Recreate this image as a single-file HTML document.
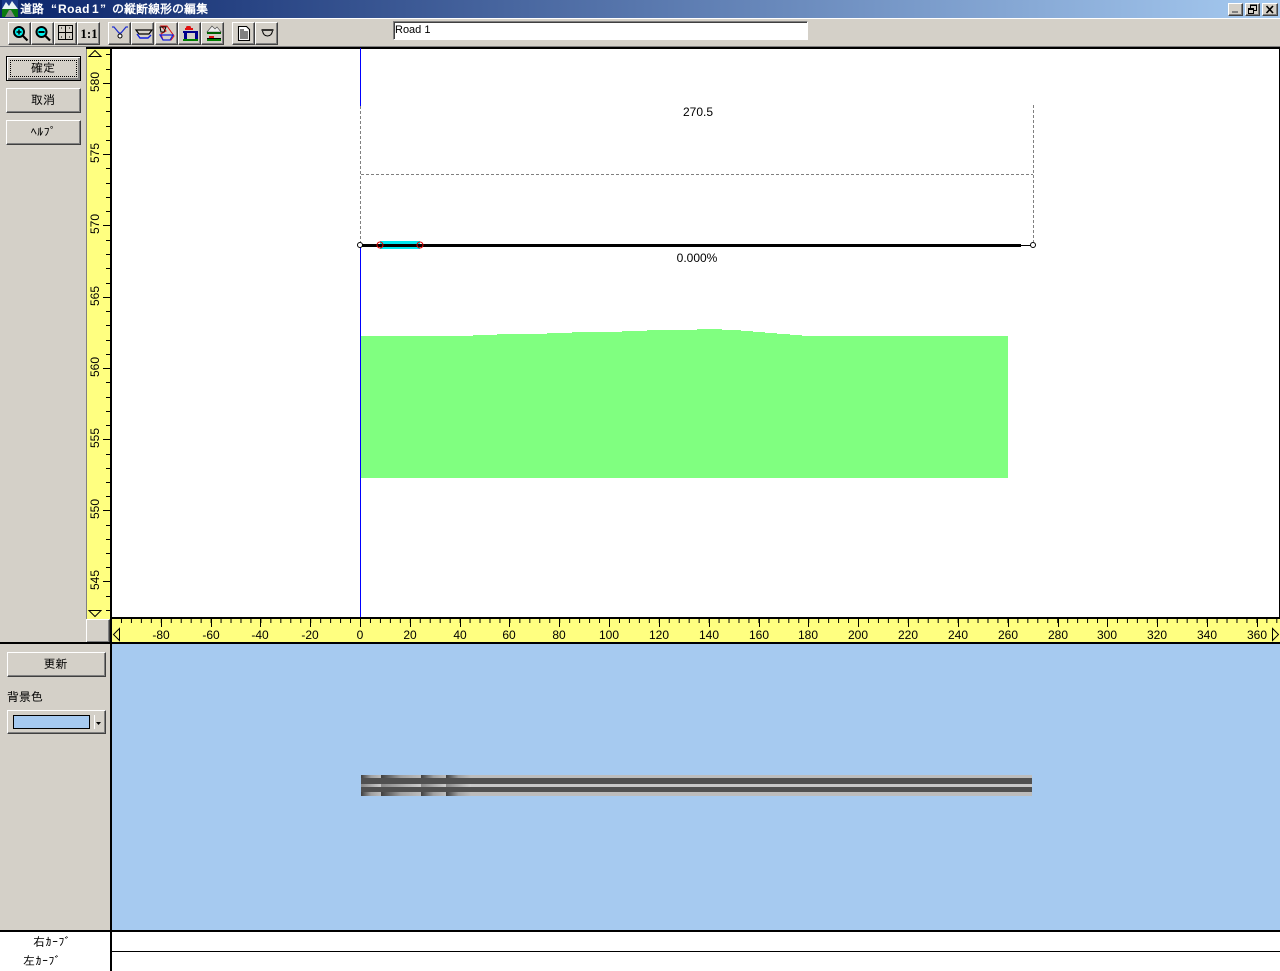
<!DOCTYPE html>
<html lang="ja"><head><meta charset="utf-8"><title>道路 Road 1</title>
<style>
html,body{margin:0;padding:0;width:1280px;height:971px;overflow:hidden;background:#d4d0c8}
body{position:relative;font-family:"Liberation Sans","WenQuanYi Zen Hei","IPAGothic",sans-serif;font-size:12px;color:#000}
.a{position:absolute}
.b{position:absolute;box-sizing:border-box;background:#d4d0c8;border:1px solid;border-color:#fff #404040 #404040 #fff;box-shadow:inset -1px -1px 0 #808080;text-align:center;font-family:"IPAGothic","WenQuanYi Zen Hei",sans-serif;font-size:12px}
.t{position:absolute;top:1px;height:16px;line-height:16px;color:#fff;font-weight:bold;font-size:12px;font-family:"IPAGothic","WenQuanYi Zen Hei",sans-serif;white-space:nowrap}
.l{font-family:"Liberation Sans",sans-serif}
svg{position:absolute;display:block}
</style></head><body>
<div class="a" style="left:0;top:0;width:1280px;height:18px;background:linear-gradient(90deg,#0a246a,#a6caf0)"></div>
<svg style="left:2px;top:0" width="16" height="17" viewBox="0 0 16 17"><rect width="16" height="9" fill="#1a3a8a"/><path d="M0 9L4 2 7 6 10 1 16 9z" fill="#e8f4f4"/><rect y="9" width="16" height="8" fill="#087a10"/><path d="M3 17L7 10h2l4 7z" fill="#888"/></svg>
<div class="t" style="left:20px">道路</div>
<div class="t l" style="left:51px">“</div>
<div class="t l" style="left:58px;letter-spacing:.5px">Road</div>
<div class="t l" style="left:92px">1</div>
<div class="t l" style="left:100px">”</div>
<div class="t" style="left:112px">の縦断線形の編集</div>
<div class="b" style="left:1228px;top:3px;width:15px;height:13px"></div><div class="a" style="left:1232px;top:11px;width:6px;height:2px;background:#808080"></div>
<div class="b" style="left:1245px;top:3px;width:15px;height:13px"></div>
<svg style="left:1245px;top:3px" width="15" height="13" fill="none" stroke="#000"><path d="M5.500 5V2.500h6v5H9M5 2h7M3.500 6.500h5v4h-5zM3 5.500h6"/></svg>
<div class="b" style="left:1262px;top:3px;width:16px;height:13px"></div>
<svg style="left:1262px;top:3px" width="16" height="13" fill="none" stroke="#000" stroke-width="1.600"><path d="M4.500 3l6.500 7M11 3L4.500 10"/></svg>

<div class="a" style="left:0;top:18px;width:1280px;height:1px;background:#fff"></div>
<div class="a" style="left:0;top:46px;width:1280px;height:1px;background:#808080"></div>
<div class="a" style="left:86px;top:47px;width:1194px;height:2px;background:#000"></div>

<!-- toolbar buttons -->
<div class="b" style="left:8px;top:22px;width:23px;height:23px"></div>
<div class="b" style="left:31px;top:22px;width:23px;height:23px"></div>
<div class="b" style="left:54px;top:22px;width:23px;height:23px"></div>
<div class="b" style="left:77px;top:22px;width:23px;height:23px"></div>
<div class="b" style="left:108px;top:22px;width:23px;height:23px"></div>
<div class="b" style="left:131px;top:22px;width:23px;height:23px"></div>
<div class="b" style="left:155px;top:22px;width:23px;height:23px"></div>
<div class="b" style="left:178px;top:22px;width:23px;height:23px"></div>
<div class="b" style="left:201px;top:22px;width:23px;height:23px"></div>
<div class="b" style="left:232px;top:22px;width:23px;height:23px"></div>
<div class="b" style="left:255px;top:22px;width:23px;height:23px"></div>
<svg style="left:0;top:15px" width="290" height="35" viewBox="0 0 290 35" fill="none">
<circle cx="19" cy="17" r="5" fill="#00f0f0" stroke="#000" stroke-width="2"/><path d="M16.500 17h5M19 14.500v5" stroke="#000" stroke-width="1.500"/><path d="M23 21l4.500 4.500" stroke="#000" stroke-width="2.200"/>
<circle cx="41.500" cy="17" r="5" fill="#00f0f0" stroke="#000" stroke-width="2"/><path d="M38.500 17h6" stroke="#000" stroke-width="2"/><path d="M45.500 21l4.500 4.500" stroke="#000" stroke-width="2.200"/>
<rect x="58.500" y="10.500" width="14" height="14" stroke="#000"/><path d="M65.500 11v13M59 17.500h13" stroke="#000" stroke-width="1"/><path d="M61 13h1M69 13h1M61 22h1M69 22h1" stroke="#000"/>
<text x="89" y="23" font-family="Liberation Serif" font-weight="bold" font-size="13" fill="#000" text-anchor="middle">1:1</text>
<path d="M112 12h2l5 6h2l5-6h2" stroke="#2030d0" stroke-width="1.300"/><circle cx="120" cy="21" r="2" fill="#fff" stroke="#000"/>
<path d="M136 15h16l-3 4h-10z" fill="#d4d0c8" stroke="#000" stroke-width="1.200"/><path d="M137 19l3 4h8l3-3" stroke="#1020e0" stroke-width="1.400"/>
<path d="M161 11h6l7 10-3 4h-8l-2-6 5-3z" stroke="#e01010"/><path d="M160 12h6l-2 5h-3z" stroke="#000"/><path d="M160 20h13l-3 5h-7z" stroke="#1020e0" stroke-width="1.200"/>
<rect x="186" y="11" width="5" height="3" rx="1.500" fill="#e01010"/><rect x="185" y="13" width="8" height="2" fill="#e01010"/><path d="M183 16h15v2h-15zM184 18h3v6h-3zM195 18h3v6h-3z" fill="#00008c"/><rect x="183" y="24" width="15" height="2" fill="#008000"/>
<path d="M207 17l5-6 3 3 2-2 4 5z" fill="#eee" stroke="#444" stroke-width=".600"/><path d="M207 17h14v2h-14z" fill="#006000"/><rect x="207" y="23" width="14" height="1" fill="#000"/><rect x="209" y="21" width="5" height="2" fill="#e01010"/><rect x="207" y="24" width="14" height="2" fill="#008000"/>
<path d="M238.500 11.500h8l3 3v11h-11z" fill="#fff" stroke="#000" stroke-width="1.100"/><path d="M240 15h4M240 17h8M240 19h8M240 21h8M240 23h8" stroke="#000"/>
<path d="M261.500 15h12" stroke="#000" stroke-width="1.500"/><path d="M262.500 16q1 5 5 5t5-5" stroke="#000"/>
</svg>
<div class="a" style="left:393px;top:21px;width:415px;height:19px;box-sizing:border-box;background:#fff;border:1px solid;border-color:#808080 #fff #fff #808080;box-shadow:inset 1px 1px 0 #404040;font-size:11px;line-height:17px;padding-left:1px">Road 1</div>

<!-- left buttons -->
<div class="b" style="left:6px;top:56px;width:75px;height:25px;border:1px solid #000;line-height:23px;padding-right:1px;box-shadow:inset 1px 1px 0 #fff,inset -2px -2px 0 #808080"><div class="a" style="left:3px;top:3px;right:3px;bottom:3px;border:1px dotted #000"></div>確定</div>
<div class="b" style="left:6px;top:88px;width:75px;height:25px;line-height:22px;padding-right:1px">取消</div>
<div class="b" style="left:6px;top:120px;width:75px;height:25px;line-height:22px;letter-spacing:.5px">ﾍﾙﾌﾟ</div>

<!-- main canvas -->
<div class="a" style="left:111px;top:49px;width:1168px;height:568px;background:#fff"></div>
<div class="a" style="left:1279px;top:47px;width:1px;height:570px;background:#000"></div>
<svg style="left:0;top:0" width="1280" height="640" viewBox="0 0 1280 640" fill="none">
<path d="M361 336H473V335H497V334H547V333H572V332H622V331H647V330H697V329H722V330H741V331H753V332H765V333H777V334H790V335H802V336H1008V478H361Z" fill="#80ff80"/>
<path d="M360.500 48V106M360.500 245V617" stroke="#0000ff"/>
<path d="M360.500 106V242M1033.500 105V242M361 174.500H1033" stroke="#808080" stroke-dasharray="3 2"/>
<rect x="380" y="241" width="40" height="8" fill="#00e8f0"/>
<rect x="360" y="244" width="661" height="3" fill="#000"/>
<rect x="1021" y="245" width="12" height="1" fill="#000"/>
<circle cx="380" cy="245" r="3" stroke="#e00000"/><circle cx="420" cy="245" r="3" stroke="#e00000"/>
<circle cx="360" cy="245" r="2.500" fill="#fff" stroke="#000"/><circle cx="1033" cy="245" r="2.500" fill="#fff" stroke="#000"/>
<text x="698" y="116" font-size="12" font-family="Liberation Sans" text-anchor="middle" fill="#000">270.5</text>
<text x="697" y="262" font-size="12" font-family="Liberation Sans" text-anchor="middle" fill="#000">0.000%</text>
</svg>

<!-- vertical ruler -->
<svg style="left:86px;top:47px" width="25" height="572" viewBox="86 47 25 572" fill="none">
<rect x="86" y="49" width="25" height="570" fill="#ffff80"/>
<path d="M86.500 49v570" stroke="#808080"/>
<path d="M106 54.500h4M106 69.500h4M106 97.500h4M106 111.500h4M106 126.500h4M106 140.500h4M106 168.500h4M106 183.500h4M106 197.500h4M106 211.500h4M106 240.500h4M106 254.500h4M106 268.500h4M106 283.500h4M106 311.500h4M106 325.500h4M106 340.500h4M106 354.500h4M106 382.500h4M106 397.500h4M106 411.500h4M106 425.500h4M106 454.500h4M106 468.500h4M106 482.500h4M106 496.500h4M106 525.500h4M106 539.500h4M106 553.500h4M106 567.500h4M106 596.500h4M106 610.500h4" stroke="#000"/>
<path d="M103 83.500h7M103 154.500h7M103 225.500h7M103 297.500h7M103 368.500h7M103 439.500h7M103 510.500h7M103 581.500h7" stroke="#000"/>
<path d="M89 56.500l6-6 6 6zM89 610.500l6 6 6-6z" stroke="#000"/>
<g font-family="Liberation Sans" font-size="12" fill="#000" text-anchor="middle">
<text transform="translate(99 82) rotate(-90)">580</text>
<text transform="translate(99 153) rotate(-90)">575</text>
<text transform="translate(99 224) rotate(-90)">570</text>
<text transform="translate(99 296) rotate(-90)">565</text>
<text transform="translate(99 367) rotate(-90)">560</text>
<text transform="translate(99 438) rotate(-90)">555</text>
<text transform="translate(99 509) rotate(-90)">550</text>
<text transform="translate(99 580) rotate(-90)">545</text>
</g></svg>

<div class="b" style="left:86px;top:619px;width:24px;height:24px"></div>

<!-- horizontal ruler -->
<svg style="left:111px;top:617px" width="1169" height="26" viewBox="111 617 1169 26" fill="none">
<defs><pattern id="ht" width="9.960" height="26" patternUnits="userSpaceOnUse" x="360" y="617"><rect x="0" y="2" width="1" height="4" fill="#000"/></pattern></defs>
<rect x="111" y="617" width="1169" height="26" fill="#ffff80"/>
<rect x="111" y="617" width="1169" height="26" fill="url(#ht)"/>
<rect x="111" y="617" width="1169" height="2" fill="#000"/>
<path d="M161.500 619v8M211.500 619v8M260.500 619v8M310.500 619v8M360.500 619v8M410.500 619v8M460.500 619v8M509.500 619v8M559.500 619v8M609.500 619v8M659.500 619v8M709.500 619v8M759.500 619v8M808.500 619v8M858.500 619v8M908.500 619v8M958.500 619v8M1008.500 619v8M1058.500 619v8M1107.500 619v8M1157.500 619v8M1207.500 619v8M1257.500 619v8" stroke="#000"/>
<path d="M119.500 628.500v12l-6-6zM1272.500 628.500v12l6-6z" stroke="#000"/>
<g font-family="Liberation Sans" font-size="12" fill="#000" text-anchor="middle">
<text x="161" y="639">-80</text><text x="211" y="639">-60</text><text x="260" y="639">-40</text><text x="310" y="639">-20</text><text x="360" y="639">0</text><text x="410" y="639">20</text><text x="460" y="639">40</text><text x="509" y="639">60</text><text x="559" y="639">80</text><text x="609" y="639">100</text><text x="659" y="639">120</text><text x="709" y="639">140</text><text x="759" y="639">160</text><text x="808" y="639">180</text><text x="858" y="639">200</text><text x="908" y="639">220</text><text x="958" y="639">240</text><text x="1008" y="639">260</text><text x="1058" y="639">280</text><text x="1107" y="639">300</text><text x="1157" y="639">320</text><text x="1207" y="639">340</text><text x="1257" y="639">360</text>
</g></svg>

<!-- lower pane -->
<div class="a" style="left:0;top:642px;width:1280px;height:2px;background:#000"></div>
<div class="a" style="left:112px;top:644px;width:1168px;height:286px;background:#a6caf0"></div>
<div class="a" style="left:110px;top:617px;width:2px;height:354px;background:#000"></div>
<div class="a" style="left:110px;top:49px;width:2px;height:568px;background:#000"></div>
<div class="b" style="left:7px;top:652px;width:99px;height:25px;line-height:22px;padding-right:2px">更新</div>
<div class="a" style="left:7px;top:690px;font-family:'IPAGothic','WenQuanYi Zen Hei',sans-serif;font-size:12px;line-height:14px">背景色</div>
<div class="b" style="left:7px;top:710px;width:99px;height:24px"></div>
<div class="a" style="left:13px;top:715px;width:77px;height:14px;box-sizing:border-box;border:1px solid #000;background:#a6caf0"></div>
<div class="a" style="left:94px;top:715px;width:1px;height:14px;background:#fff"></div>
<svg style="left:96px;top:722px" width="5" height="3"><path d="M0 0h5L2.500 3z" fill="#000"/></svg>

<!-- road -->
<svg style="left:361px;top:775px" width="672" height="21" viewBox="0 0 672 21">
<defs><linearGradient id="f"><stop offset="0" stop-color="#404040"/><stop offset=".5" stop-color="#a0a0a0"/><stop offset="1" stop-color="#bcbcbc"/></linearGradient>
<linearGradient id="m"><stop offset="0" stop-color="#888"/><stop offset="1" stop-color="#cccccc"/></linearGradient></defs>
<rect width="671" height="21" fill="#bcbcbc"/>
<rect y="3" width="671" height="6" fill="#505050"/>
<rect y="9" width="671" height="3" fill="#c8c8c8"/>
<rect y="12" width="671" height="5" fill="#505050"/>
<g fill="url(#f)">
<rect x="0" width="20" height="3"/><rect x="20" width="40" height="3"/><rect x="60" width="25" height="3"/><rect x="85" width="25" height="3"/>
<rect x="0" y="17" width="20" height="4"/><rect x="20" y="17" width="40" height="4"/><rect x="60" y="17" width="25" height="4"/><rect x="85" y="17" width="25" height="4"/>
</g>
<g fill="url(#m)"><rect x="0" y="9" width="20" height="3"/><rect x="20" y="9" width="40" height="3"/><rect x="60" y="9" width="25" height="3"/><rect x="85" y="9" width="25" height="3"/></g>
</svg>

<!-- bottom -->
<div class="a" style="left:0;top:930px;width:1280px;height:2px;background:#000"></div>
<div class="a" style="left:0;top:932px;width:110px;height:39px;background:#fff"></div>
<div class="a" style="left:112px;top:932px;width:1168px;height:39px;background:#fff"></div>
<div class="a" style="left:112px;top:951px;width:1168px;height:1px;background:#000"></div>
<div class="a" style="left:33px;top:935px;font-family:'IPAGothic','WenQuanYi Zen Hei',sans-serif;font-size:12px;line-height:14px;white-space:nowrap;letter-spacing:.5px">右ｶｰﾌﾞ</div>
<div class="a" style="left:23px;top:954px;font-family:'IPAGothic','WenQuanYi Zen Hei',sans-serif;font-size:12px;line-height:14px;white-space:nowrap;letter-spacing:.5px">左ｶｰﾌﾞ</div>
</body></html>
